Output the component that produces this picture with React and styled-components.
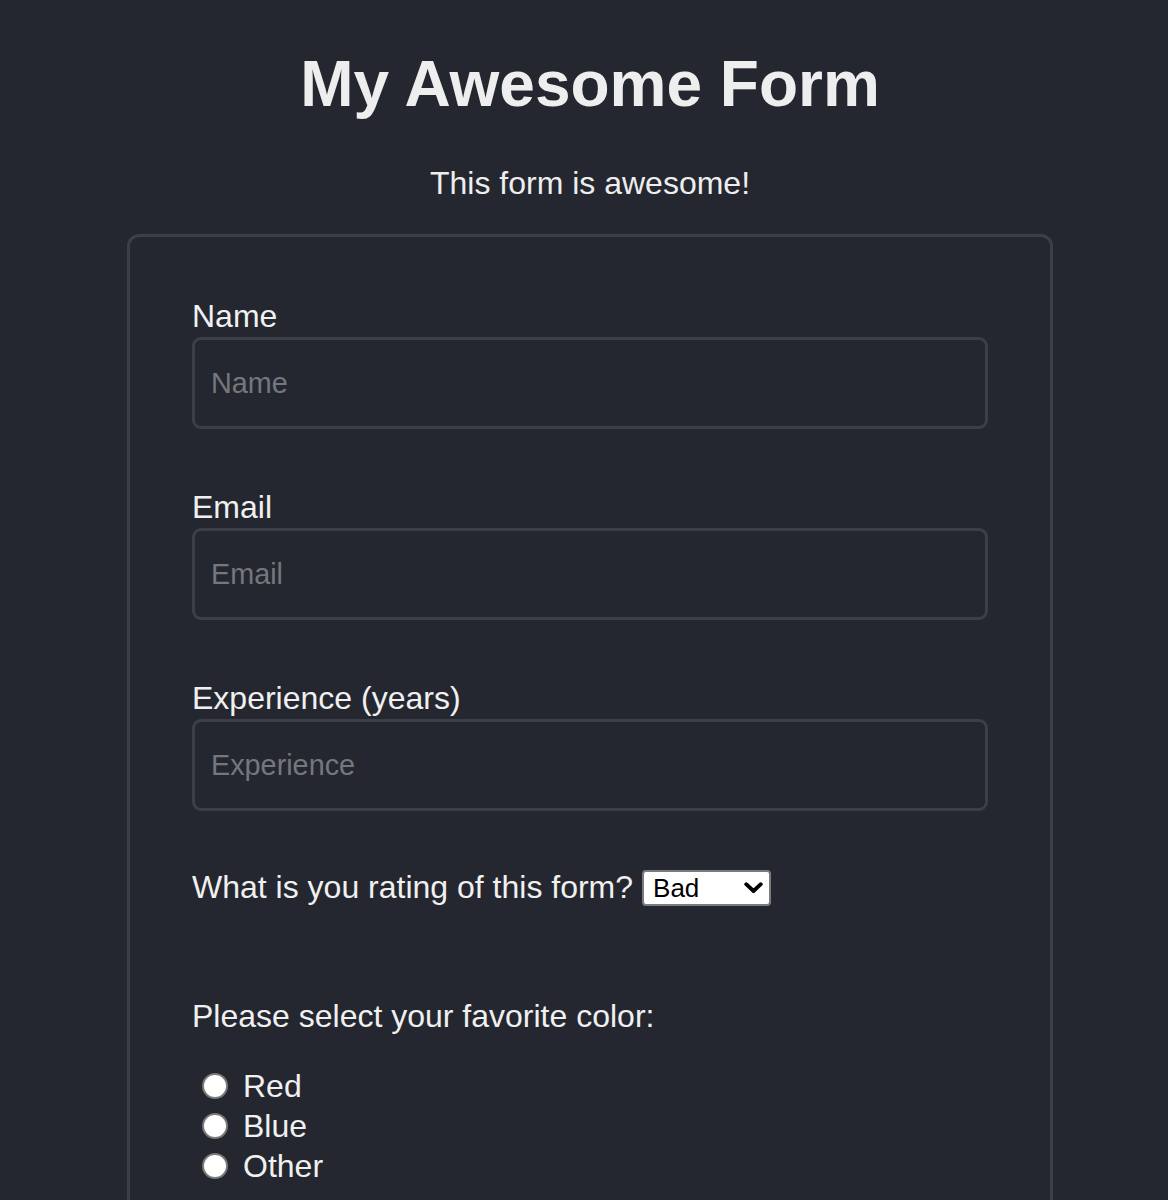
import React from "react";
import styled, { createGlobalStyle } from "styled-components";

const GlobalStyle = createGlobalStyle`
  html, body {
    margin: 0;
    padding: 0;
    background: #24272f;
    color: #efefef;
    font-family: "Liberation Sans", Arial, Helvetica, sans-serif;
  }
  * { box-sizing: border-box; }
`;

const Page = styled.div`
  min-height: 1200px;
  padding: 47px 115px 0 127px;
  display: flex;
  flex-direction: column;
  align-items: stretch;
`;

const Title = styled.h1`
  margin: 0;
  font-size: 64px;
  line-height: 74px;
  font-weight: 700;
  text-align: center;
  color: #eeeeee;
`;

const Subtitle = styled.p`
  margin: 44px 0 0;
  font-size: 32px;
  line-height: 37px;
  text-align: center;
  color: #eeeeee;
`;

const Card = styled.form`
  margin-top: 32px;
  border: 3px solid #3b3f48;
  border-bottom: none;
  border-radius: 12px 12px 0 0;
  padding: 61px 62px 80px;
  display: flex;
  flex-direction: column;
`;

const Field = styled.div`
  display: flex;
  flex-direction: column;
  margin-bottom: 60px;
`;

const Label = styled.label`
  display: block;
  font-size: 32px;
  line-height: 37px;
  color: #f0f0f0;
  margin-bottom: 2px;
`;

const Input = styled.input`
  height: 92px;
  width: 100%;
  background: #24272f;
  border: 3px solid #3b3f48;
  border-radius: 9px;
  padding: 0 16px;
  font-family: "Liberation Sans", Arial, Helvetica, sans-serif;
  font-size: 28.8px;
  color: #efefef;
  outline: none;
  &::placeholder {
    color: #74777c;
  }
`;

const InlineRow = styled.div`
  display: flex;
  align-items: center;
  gap: 9px;
  margin-top: -2px;
  font-size: 32px;
  line-height: 37px;
  color: #f0f0f0;
`;

const SelectWrap = styled.div`
  position: relative;
  display: inline-flex;
  margin-top: 1px;
`;

const Select = styled.select`
  appearance: none;
  -webkit-appearance: none;
  width: 129px;
  height: 36px;
  background: #ffffff;
  color: #000000;
  border: 2px solid #7b7b7b;
  border-radius: 4px;
  padding: 0 0 0 9px;
  font-family: "Liberation Sans", Arial, Helvetica, sans-serif;
  font-size: 26px;
  outline: none;
`;

const Chevron = styled.svg`
  position: absolute;
  right: 8px;
  top: 12px;
  width: 19px;
  height: 12px;
  pointer-events: none;
`;

const Question = styled.p`
  margin: 92px 0 0;
  font-size: 32px;
  line-height: 37px;
  color: #f0f0f0;
`;

const RadioList = styled.div`
  margin-top: 31px;
  display: flex;
  flex-direction: column;
`;

const RadioRow = styled.label`
  display: flex;
  align-items: center;
  height: 40px;
  font-size: 32px;
  line-height: 37px;
  color: #f0f0f0;
`;

const Radio = styled.input`
  appearance: none;
  -webkit-appearance: none;
  width: 26px;
  height: 26px;
  margin: 0 15px 0 10px;
  border-radius: 50%;
  background: #ffffff;
  border: 2px solid #7a7a7a;
  flex: none;
`;

const fields = [
  { id: "name", label: "Name", placeholder: "Name", type: "text" },
  { id: "email", label: "Email", placeholder: "Email", type: "email" },
  { id: "exp", label: "Experience (years)", placeholder: "Experience", type: "number" },
];

const colors = ["Red", "Blue", "Other"];

export default function App() {
  return (
    <>
      <GlobalStyle />
      <Page>
        <Title>My Awesome Form</Title>
        <Subtitle>This form is awesome!</Subtitle>
        <Card onSubmit={(e) => e.preventDefault()}>
          {fields.map((f) => (
            <Field key={f.id}>
              <Label htmlFor={f.id}>{f.label}</Label>
              <Input id={f.id} type={f.type} placeholder={f.placeholder} />
            </Field>
          ))}
          <InlineRow>
            <span>What is you rating of this form?</span>
            <SelectWrap>
              <Select defaultValue="bad">
                <option value="bad">Bad</option>
                <option value="ok">Ok</option>
                <option value="good">Good</option>
              </Select>
              <Chevron viewBox="0 0 19 12">
                <path
                  d="M2.2 2.2 L9.5 9 L16.8 2.2"
                  fill="none"
                  stroke="#000"
                  strokeWidth="3.8"
                  strokeLinecap="round"
                  strokeLinejoin="round"
                />
              </Chevron>
            </SelectWrap>
          </InlineRow>
          <Question>Please select your favorite color:</Question>
          <RadioList>
            {colors.map((c) => (
              <RadioRow key={c}>
                <Radio type="radio" name="color" value={c.toLowerCase()} />
                {c}
              </RadioRow>
            ))}
          </RadioList>
        </Card>
      </Page>
    </>
  );
}
